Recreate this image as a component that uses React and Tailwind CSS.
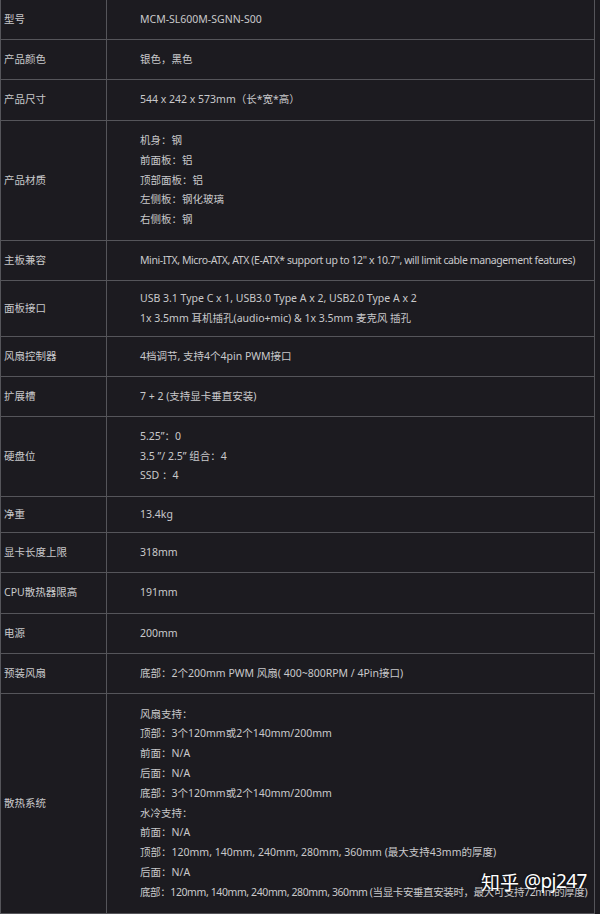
const rows = [
  { label: '型号', h: 40, lines: ['MCM-SL600M-SGNN-S00'] },
  { label: '产品颜色', h: 40, lines: ['银色，黑色'] },
  { label: '产品尺寸', h: 41, lines: ['544 x 242 x 573mm（长*宽*高）'] },
  { label: '产品材质', h: 120, lines: ['机身：钢', '前面板：铝', '顶部面板：铝', '左侧板：钢化玻璃', '右侧板：钢'] },
  { label: '主板兼容', h: 40, lines: ['~Mini-ITX, Micro-ATX, ATX (E-ATX* support up to 12" x 10.7", will limit cable management features)'] },
  { label: '面板接口', h: 56, lines: ['USB 3.1 Type C x 1, USB3.0 Type A x 2, USB2.0 Type A x 2', '1x 3.5mm 耳机插孔(audio+mic) & 1x 3.5mm 麦克风 插孔'] },
  { label: '风扇控制器', h: 40, lines: ['4档调节, 支持4个4pin PWM接口'] },
  { label: '扩展槽', h: 40, lines: ['7 + 2 (支持显卡垂直安装)'] },
  { label: '硬盘位', h: 80, lines: ['5.25”：0', '3.5 ”/ 2.5” 组合：4', 'SSD ：4'] },
  { label: '净重', h: 36, lines: ['13.4kg'] },
  { label: '显卡长度上限', h: 40, lines: ['318mm'] },
  { label: 'CPU散热器限高', h: 41, lines: ['191mm'] },
  { label: '电源', h: 40, lines: ['200mm'] },
  { label: '预装风扇', h: 40, lines: ['底部：2个200mm PWM 风扇( 400~800RPM / 4Pin接口)'] },
  {
    label: '散热系统',
    h: 220,
    lines: [
      '风扇支持：',
      '顶部：3个120mm或2个140mm/200mm',
      '前面：N/A',
      '后面：N/A',
      '底部：3个120mm或2个140mm/200mm',
      '水冷支持：',
      '前面：N/A',
      '顶部：120mm, 140mm, 240mm, 280mm, 360mm (最大支持43mm的厚度)',
      '后面：N/A',
      '~底部：120mm, 140mm, 240mm, 280mm, 360mm (当显卡安垂直安装时，最大可支持72mm的厚度)',
    ],
  },
]

// lines starting with "~" are the long ones, set a bit tighter so they fit the cell
const Line = ({ text }) =>
  text.startsWith('~') ? (
    <div className="tracking-[-0.4px]">{text.slice(1)}</div>
  ) : (
    <div>{text}</div>
  )

const App = () => {
  return (
    <div
      className="relative w-[600px] h-[914px] overflow-hidden bg-[#1c1b20] text-[#c9c9cb] text-[10.5px]"
      style={{ fontFamily: '"Noto Sans", "Noto Sans CJK SC", sans-serif' }}
    >
      <div className="border-l border-r border-[#55555a] mr-[5px]">
        {rows.map((row, i) => (
          <div
            key={i}
            className="grid grid-cols-[106px_1fr] border-b border-[#55555a]"
            style={{ height: row.h }}
          >
            <div className="flex items-center pl-[3px] border-r border-[#55555a] whitespace-nowrap">
              {row.label}
            </div>
            <div className="flex flex-col justify-center pl-[33px] leading-[19.8px] whitespace-nowrap">
              {row.lines.map((line, j) => (
                <Line key={j} text={line} />
              ))}
            </div>
          </div>
        ))}
      </div>

      {/* watermark */}
      <div className="absolute left-[481px] top-[872px] flex items-center gap-[5px] whitespace-nowrap text-white text-[19px] leading-none [text-shadow:0_0_3px_rgba(0,0,0,0.8)]">
        <span style={{ fontFamily: '"Noto Sans CJK SC", sans-serif' }}>知乎</span>
        <span className="tracking-[-0.6px]">@pj247</span>
      </div>
    </div>
  )
}

export default App
